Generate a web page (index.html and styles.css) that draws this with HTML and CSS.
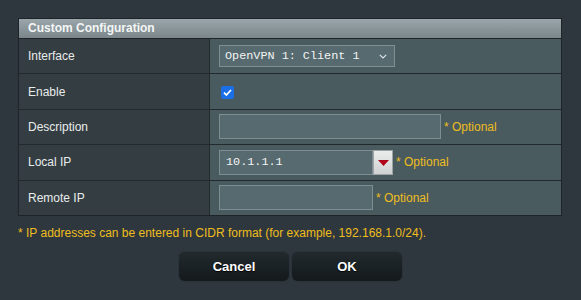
FILE: index.html
```html
<!DOCTYPE html>
<html>
<head>
<meta charset="utf-8">
<link rel="stylesheet" href="styles.css">
</head>
<body>
<div class="dialog">
  <div class="panel">
    <div class="panel-head">Custom Configuration</div>
    <div class="row">
      <div class="label">Interface</div>
      <div class="value">
        <div class="select">
          <span class="mono">OpenVPN 1: Client 1</span>
          <svg class="chev" width="8" height="5" viewBox="0 0 8 5"><path d="M0.8 0.8 L4 4 L7.2 0.8" fill="none" stroke="#e0e6e8" stroke-width="1.1"/></svg>
        </div>
      </div>
    </div>
    <div class="row">
      <div class="label">Enable</div>
      <div class="value">
        <span class="check"><svg width="13" height="13" viewBox="0 0 13 13"><path d="M3 6.7 L5.4 9 L10 4" fill="none" stroke="#fff" stroke-width="1.8"/></svg></span>
      </div>
    </div>
    <div class="row">
      <div class="label">Description</div>
      <div class="value">
        <div class="input wide"></div>
        <span class="opt">* Optional</span>
      </div>
    </div>
    <div class="row">
      <div class="label">Local IP</div>
      <div class="value">
        <div class="input narrow"><span class="mono">10.1.1.1</span></div>
        <div class="ddbtn"><svg width="11" height="6" viewBox="0 0 11 6"><path d="M0 0 H11 L5.5 6 Z" fill="#b0001a"/></svg></div>
        <span class="opt">* Optional</span>
      </div>
    </div>
    <div class="row">
      <div class="label">Remote IP</div>
      <div class="value">
        <div class="input narrow"></div>
        <span class="opt">* Optional</span>
      </div>
    </div>
  </div>
  <p class="note">* IP addresses can be entered in CIDR format (for example, 192.168.1.0/24).</p>
  <div class="buttons">
    <button class="btn">Cancel</button>
    <button class="btn">OK</button>
  </div>
</div>
</body>
</html>
```
FILE: styles.css
```css
html, body {
  margin: 0;
  padding: 0;
  background: #2e373d;
}
body {
  font-family: "Liberation Sans", Arial, sans-serif;
  font-size: 12px;
  color: #e9ecec;
  width: 581px;
  height: 300px;
  overflow: hidden;
}
.dialog {
  padding: 18px 18px 0 18px;
}
.panel {
  width: 542px;
  border: 1px solid #1e2427;
  background: #4a5b5f;
}
.panel-head {
  height: 19px;
  line-height: 19px;
  padding-left: 9px;
  font-weight: bold;
  color: #f4f6f6;
  background: linear-gradient(#9aa6aa, #7a868a);
  border-bottom: 1px solid #1e2427;
}
.row {
  display: flex;
  height: 34.4px;
  border-bottom: 1px solid #232a2d;
}
.row:last-child {
  border-bottom: none;
}
.label {
  width: 181px;
  padding-left: 9px;
  display: flex;
  align-items: center;
  background: #343e42;
  border-right: 1px solid #232a2d;
}
.value {
  flex: 1;
  display: flex;
  align-items: center;
  padding-left: 9px;
  background: #4a5b5f;
}
.mono {
  font-family: "Liberation Mono", "Courier New", monospace;
  font-size: 11.8px;
  color: #f2f4f4;
}
.select {
  width: 176px;
  height: 22px;
  border: 1px solid #7e8e92;
  background: #566a6f;
  display: flex;
  align-items: center;
  justify-content: space-between;
  padding: 0 7px 0 5px;
  box-sizing: border-box;
}
.chev {
  margin-top: 1px;
}
.check {
  width: 13px;
  height: 13px;
  border-radius: 2px;
  background: #1a6fe6;
  display: block;
  margin: 1px 0 0 2px;
}
.check svg {
  display: block;
}
.input {
  height: 25px;
  box-sizing: border-box;
  border: 1px solid #7d8e92;
  background: #576a6f;
  display: flex;
  align-items: center;
  padding-left: 6px;
}
.input.wide {
  width: 222px;
}
.input.narrow {
  width: 154px;
}
.ddbtn {
  width: 20px;
  height: 25px;
  box-sizing: border-box;
  border: 1px solid #9ea4a6;
  background: linear-gradient(#ececec, #cfd1d2);
  display: flex;
  align-items: center;
  justify-content: center;
}
.ddbtn svg {
  margin-top: 2px;
}
.opt {
  color: #eebd1e;
  margin-left: 3px;
}
.note {
  margin: 10px 0 0 0;
  color: #eebd1e;
  line-height: 14px;
}
.buttons {
  display: flex;
  justify-content: center;
  gap: 3px;
  margin-top: 12px;
  width: 545px;
}
.btn {
  width: 110px;
  height: 29px;
  border: none;
  border-radius: 6px;
  background: linear-gradient(#222a2e, #14191b);
  color: #ffffff;
  font-family: "Liberation Sans", Arial, sans-serif;
  font-weight: bold;
  font-size: 13px;
  text-shadow: 0 1px 1px #000;
  box-shadow: 0 0 1px #10151a;
}
```
